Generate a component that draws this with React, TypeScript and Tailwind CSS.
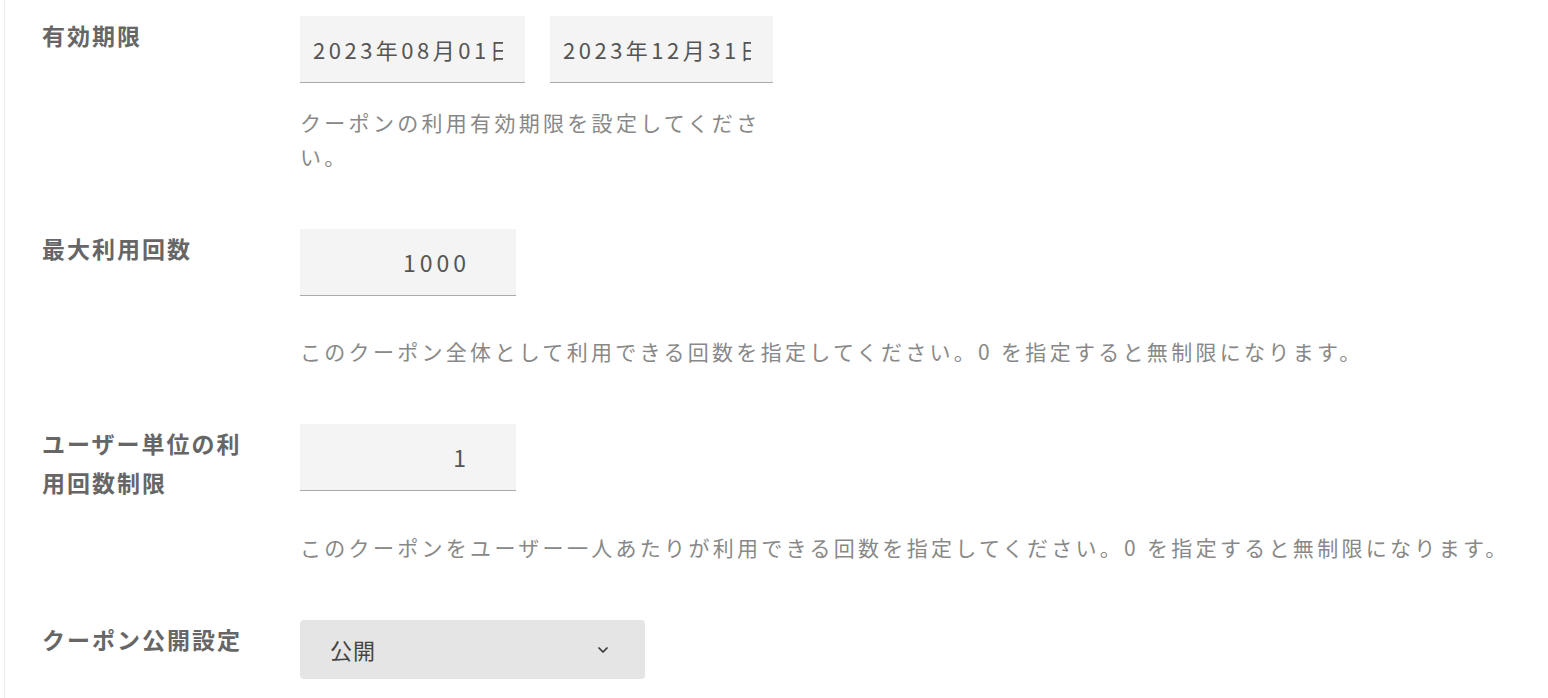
import { ChevronDown } from 'lucide-react';

const font = '"Noto Sans CJK JP", "Noto Sans", sans-serif';

function Label({ children }: { children: React.ReactNode }) {
  return (
    <div className="w-[258px] shrink-0 pr-[36px] text-[23px] leading-[39px] font-bold tracking-[2px] text-[#666]">
      {children}
    </div>
  );
}

function Help({ children, className = '' }: { children: React.ReactNode; className?: string }) {
  return (
    <p className={`text-[21px] leading-[34px] tracking-[3.3px] text-[#888] ${className}`}>{children}</p>
  );
}

function DateBox({ value, width }: { value: string; width: string }) {
  return (
    <div className={`flex h-[67px] items-center border-b border-[#aaa] bg-[#f4f4f4] pr-[22px] pl-[13px] ${width}`}>
      <div className="overflow-hidden text-[22px] tracking-[3.5px] whitespace-nowrap text-[#555]">{value}</div>
    </div>
  );
}

function NumberBox({ value }: { value: string }) {
  return (
    <div className="flex h-[67px] w-[216px] items-center justify-end border-b border-[#aaa] bg-[#f4f4f4] pr-[46px] text-[23px] tracking-[4px] text-[#555]">
      {value}
    </div>
  );
}

export default function App() {
  return (
    <div className="min-h-[698px] bg-white" style={{ fontFamily: font }}>
      <div className="ml-[4px] min-h-[698px] border-l border-[#ececec] pt-[16px] pl-[37px]">
        {/* 有効期限 */}
        <div className="flex">
          <Label>有効期限</Label>
          <div className="flex flex-col">
            <div className="flex gap-[25px]">
              <DateBox value="2023年08月01日" width="w-[225px]" />
              <DateBox value="2023年12月31日" width="w-[223px]" />
            </div>
            <Help className="mt-[22px] w-[473px]">クーポンの利用有効期限を設定してください。</Help>
          </div>
        </div>

        {/* 最大利用回数 */}
        <div className="mt-[56px] flex">
          <Label>最大利用回数</Label>
          <div className="flex flex-col">
            <NumberBox value="1000" />
            <Help className="mt-[38px]">
              このクーポン全体として利用できる回数を指定してください。0 を指定すると無制限になります。
            </Help>
          </div>
        </div>

        {/* ユーザー単位 */}
        <div className="mt-[56px] flex">
          <Label>ユーザー単位の利用回数制限</Label>
          <div className="flex flex-col">
            <NumberBox value="1" />
            <Help className="mt-[39px]">
              このクーポンをユーザー一人あたりが利用できる回数を指定してください。0 を指定すると無制限になります。
            </Help>
          </div>
        </div>

        {/* 公開設定 */}
        <div className="mt-[56px] flex">
          <Label>クーポン公開設定</Label>
          <div className="flex h-[59px] w-[345px] items-center justify-between rounded-[4px] bg-[#e5e5e5] pr-[34px] pl-[30px]">
            <span className="text-[22px] tracking-[1px] text-[#444]">公開</span>
            <ChevronDown className="h-[16px] w-[16px] text-[#333]" strokeWidth={2.5} />
          </div>
        </div>
      </div>
    </div>
  );
}
